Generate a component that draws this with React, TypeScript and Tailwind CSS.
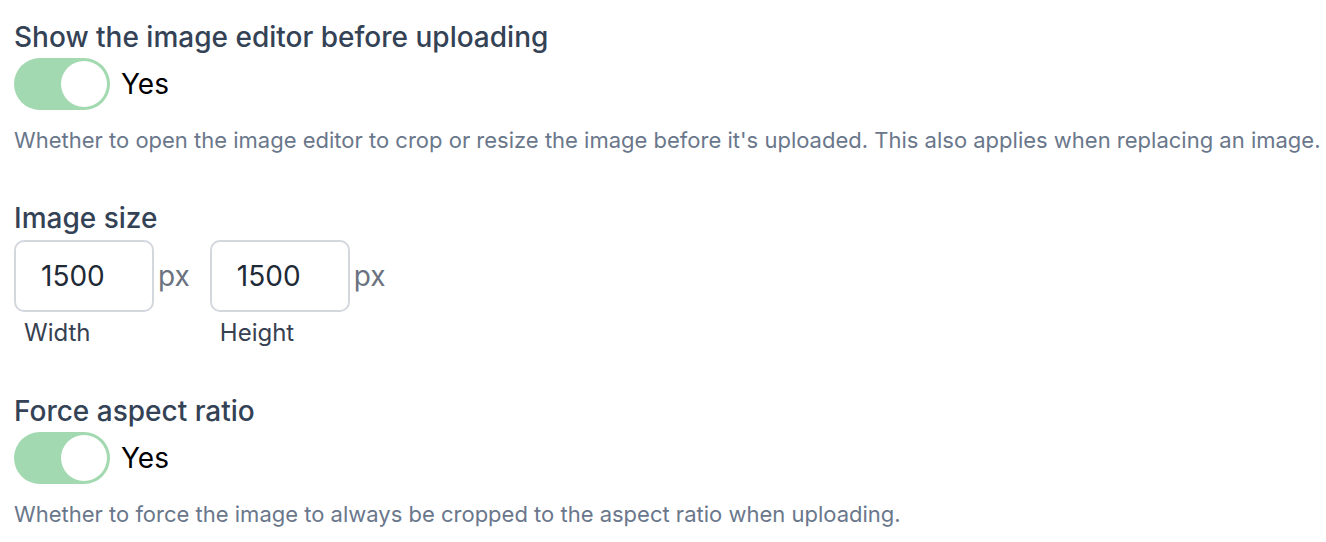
const font = { fontFamily: 'Inter, "Noto Sans", sans-serif' };

const Toggle = ({ label }: { label: string }) => (
  <div className="flex items-center gap-[11px]">
    <div className="flex h-[52px] w-[96px] items-center justify-end rounded-full bg-[#a3d9b1] p-[3px]">
      <div className="h-[46px] w-[46px] rounded-full bg-white" />
    </div>
    <span className="text-[28px] leading-[36px] text-black">{label}</span>
  </div>
);

const SizeInput = ({ value, label }: { value: string; label: string }) => (
  <div className="flex flex-col">
    <div className="flex items-center">
      <div className="flex h-[72px] w-[140px] items-center rounded-[10px] border-2 border-[#d3d8df] bg-white pl-[25px] text-[28px] text-[#1f2a37]">
        {value}
      </div>
      <span className="ml-[4px] text-[28px] text-[#6b7280]">px</span>
    </div>
    <span className="mt-[8px] pl-[10px] text-[24px] leading-[26px] text-[#374151]">{label}</span>
  </div>
);

const App = () => {
  return (
    <div className="min-h-[542px] w-[1326px] bg-white pl-[14px] pt-[19px]" style={font}>
      <section>
        <h2 className="text-[28px] font-medium leading-[36px] text-[#344256]">Show the image editor before uploading</h2>
        <div className="mt-[3px]">
          <Toggle label="Yes" />
        </div>
        <p className="mt-[15px] text-[22px] leading-[30px] text-[#6a778b]">
          Whether to open the image editor to crop or resize the image before it's uploaded. This also applies when replacing an image.
        </p>
      </section>

      <section className="mt-[45px]">
        <h2 className="text-[28px] font-medium leading-[36px] text-[#344256]">Image size</h2>
        <div className="mt-[4px] flex gap-[20px]">
          <SizeInput value="1500" label="Width" />
          <SizeInput value="1500" label="Height" />
        </div>
      </section>

      <section className="mt-[47px]">
        <h2 className="text-[28px] font-medium leading-[36px] text-[#344256]">Force aspect ratio</h2>
        <div className="mt-[3px]">
          <Toggle label="Yes" />
        </div>
        <p className="mt-[15px] text-[22px] leading-[30px] text-[#6a778b]">
          Whether to force the image to always be cropped to the aspect ratio when uploading.
        </p>
      </section>
    </div>
  );
};

export default App;
